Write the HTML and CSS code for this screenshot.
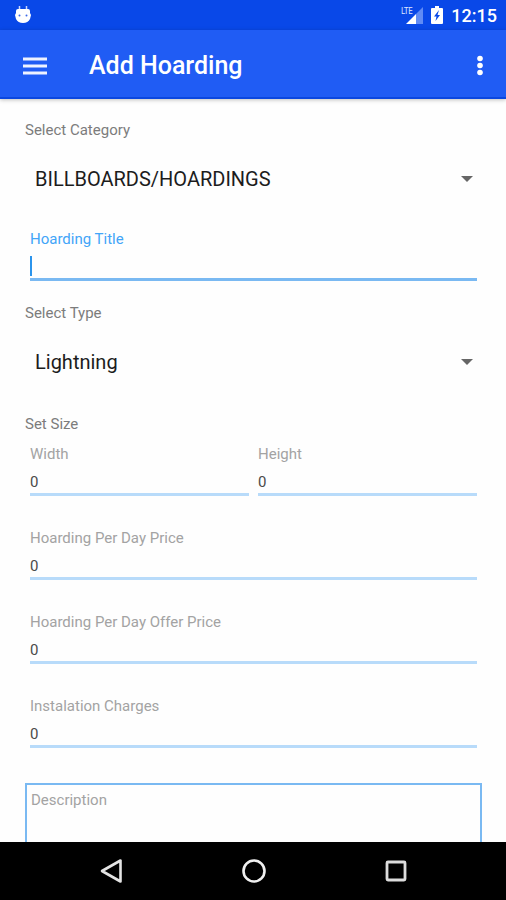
FILE: index.html
```html
<!DOCTYPE html>
<html lang="en">
<head>
<meta charset="utf-8">
<meta name="viewport" content="width=device-width, initial-scale=1">
<title>Add Hoarding</title>
<link rel="stylesheet" href="styles.css">
</head>
<body>
<div class="status-bar">
  <svg class="status-robot" width="18" height="20" viewBox="0 0 18 20" aria-hidden="true">
    <path d="M5.500 1v4M12.500 1v4" stroke="#c9d6fd" stroke-width="1.500" fill="none"/>
    <path d="M2 6Q2 4 4 4H14Q16 4 16 6V8L17 10L16 14Q14 18 9 18T2 14L1 10L2 8Z" fill="#fff"/>
    <circle cx="5.500" cy="10.500" r="1" fill="#3a67e8"/>
    <circle cx="12.500" cy="10.500" r="1" fill="#3a67e8"/>
  </svg>
  <div class="status-right">
    <svg width="22" height="20" viewBox="0 0 22 20" aria-hidden="true">
      <path d="M15 9L22 2V19H15Z" fill="#608bf5"/>
      <path d="M5 19L15 9V19Z" fill="#fff"/>
      <text class="network" x="0" y="9">LTE</text>
    </svg>
    <svg class="battery" width="12" height="18" viewBox="0 0 12 18" aria-hidden="true">
      <path d="M4 0H8V2H11Q12 2 12 3V17Q12 18 11 18H1Q0 18 0 17V3Q0 2 1 2H4Z" fill="#fff"/>
      <path d="M8 4L3 10.500H5.500L4.500 15L9 9H6.500Z" fill="#0948e8"/>
    </svg>
    <span class="time">12:15</span>
  </div>
</div>
<header class="app-bar">
  <button class="icon-button" type="button" aria-label="Menu">
    <svg width="24" height="18" viewBox="0 0 24 18"><path d="M0 2H24M0 9H24M0 16H24" stroke="#eef2ff" stroke-width="3"/></svg>
  </button>
  <h1 class="title">Add Hoarding</h1>
  <button class="icon-button" type="button" aria-label="More options">
    <svg width="6" height="22" viewBox="0 0 6 22" fill="#fff"><circle cx="3" cy="3.500" r="2.800"/><circle cx="3" cy="10.500" r="2.800"/><circle cx="3" cy="17.500" r="2.800"/></svg>
  </button>
</header>
<main class="content">
  <form class="form">
    <label class="section-label" for="category">Select Category</label>
    <div class="select-wrap">
      <select id="category" class="select"><option>BILLBOARDS/HOARDINGS</option></select>
      <svg class="arrow" width="12" height="6" viewBox="0 0 12 6"><path d="M0 0H12L6 6Z" fill="#666"/></svg>
    </div>
    <div class="field field-active">
      <label for="title">Hoarding Title</label>
      <div class="input-wrap"><input id="title" type="text"><span class="caret"></span></div>
    </div>
    <label class="section-label" for="type">Select Type</label>
    <div class="select-wrap">
      <select id="type" class="select"><option>Lightning</option></select>
      <svg class="arrow" width="12" height="6" viewBox="0 0 12 6"><path d="M0 0H12L6 6Z" fill="#666"/></svg>
    </div>
    <div class="section-label size-label">Set Size</div>
    <div class="fields">
      <div class="field-row">
        <div class="field"><label for="width">Width</label><input id="width" type="text" inputmode="numeric" value="0"></div>
        <div class="field"><label for="height">Height</label><input id="height" type="text" inputmode="numeric" value="0"></div>
      </div>
      <div class="field"><label for="price">Hoarding Per Day Price</label><input id="price" type="text" inputmode="numeric" value="0"></div>
      <div class="field"><label for="offer">Hoarding Per Day Offer Price</label><input id="offer" type="text" inputmode="numeric" value="0"></div>
      <div class="field"><label for="charges">Instalation Charges</label><input id="charges" type="text" inputmode="numeric" value="0"></div>
    </div>
    <textarea class="description" placeholder="Description" aria-label="Description" rows="6"></textarea>
  </form>
</main>
<nav class="nav-bar" aria-label="System">
  <button class="icon-button" type="button" aria-label="Back">
    <svg width="26" height="26" viewBox="0 0 26 26"><path d="M21.500 2.500V23.500L3 13Z" fill="none" stroke="#e4e4e4" stroke-width="2.600" stroke-linejoin="round"/></svg>
  </button>
  <button class="icon-button" type="button" aria-label="Home">
    <svg width="26" height="26" viewBox="0 0 26 26"><circle cx="13" cy="13" r="10.500" fill="none" stroke="#f0f0f0" stroke-width="2.600"/></svg>
  </button>
  <button class="icon-button" type="button" aria-label="Recent apps">
    <svg width="26" height="26" viewBox="0 0 26 26"><rect x="4" y="4" width="18" height="18" rx="1" fill="none" stroke="#dcdcdc" stroke-width="2.800"/></svg>
  </button>
</nav>
</body>
</html>
```
FILE: styles.css
```css
* { box-sizing: border-box; }

body {
  margin: 0;
  height: 100vh;
  display: flex;
  flex-direction: column;
  overflow: hidden;
  background: #fefefe;
  font-family: Roboto, "Liberation Sans", sans-serif;
}

button, input, select, textarea { font-family: inherit; }

.status-bar {
  flex: none;
  height: 30px;
  padding: 0 9px 0 14px;
  display: flex;
  align-items: center;
  justify-content: space-between;
  background: #0948e8;
  color: #fff;
}

.status-right {
  display: flex;
  align-items: center;
  gap: 8px;
}

.status-bar svg { display: block; }

.network {
  fill: #dfe7ff;
  font-family: "DejaVu Sans Condensed", Roboto, sans-serif;
  font-size: 8px;
  font-weight: 500;
}

.time {
  font-size: 18px;
  font-weight: 500;
}

.app-bar {
  flex: none;
  height: 69px;
  padding: 4px 12px 0;
  display: flex;
  align-items: center;
  background: #205cf4;
  border-bottom: 2px solid #0b47e0;
  box-shadow: 0 1px 4px rgba(0, 0, 0, 0.25);
  color: #fff;
}

.icon-button {
  padding: 0 11px;
  border: 0;
  background: none;
  display: flex;
}

.title {
  flex: 1;
  margin: 0;
  padding-left: 31px;
  font-size: 25px;
  line-height: 32px;
  font-weight: 500;
}

.content {
  flex: 1;
  min-height: 0;
  overflow: hidden;
}

.form { padding: 21px 24px 0 25px; }

.section-label {
  display: block;
  font-size: 15px;
  line-height: 20px;
  color: #7c7c7c;
}

.select-wrap {
  position: relative;
  margin: 19px 0 30px;
}

.select {
  display: block;
  width: 100%;
  height: 40px;
  padding: 0 30px 0 10px;
  border: 0;
  background: transparent;
  appearance: none;
  outline: 0;
  font-size: 20px;
  color: #1c1c1c;
}

.arrow {
  position: absolute;
  right: 9px;
  top: 17px;
  pointer-events: none;
}

.size-label { padding-top: 2px; }

.field label {
  display: block;
  font-size: 15px;
  line-height: 20px;
  color: #a3a3a3;
}

.field input {
  display: block;
  width: 100%;
  height: 32px;
  padding: 6px 0 0;
  border: 0;
  border-bottom: 3px solid #b8dbfa;
  border-radius: 0;
  outline: 0;
  background: transparent;
  font-size: 15px;
  color: #4a4a4a;
}

.field-active { margin: 0 5px 22px; }
.field-active label { color: #42a5f8; }
.field-active input { border-bottom-color: #7ab9f2; }

.input-wrap { position: relative; }

.caret {
  position: absolute;
  left: 0;
  top: 7px;
  width: 2px;
  height: 20px;
  background: #2b94ec;
}

.fields {
  margin: 10px 5px 35px;
  display: grid;
  gap: 32px;
}

.field-row {
  display: grid;
  grid-template-columns: 1fr 1fr;
  gap: 9px;
}

.description {
  display: block;
  width: 100%;
  padding: 5px 4px;
  border: 2px solid #7ab9f2;
  border-radius: 0;
  outline: 0;
  resize: none;
  background: transparent;
  font-size: 15px;
  line-height: 20px;
}

.description::placeholder { color: #a3a3a3; }

.nav-bar {
  flex: none;
  height: 58px;
  padding: 0 86px 0 88px;
  display: flex;
  align-items: center;
  justify-content: space-between;
  background: #000;
}
```
